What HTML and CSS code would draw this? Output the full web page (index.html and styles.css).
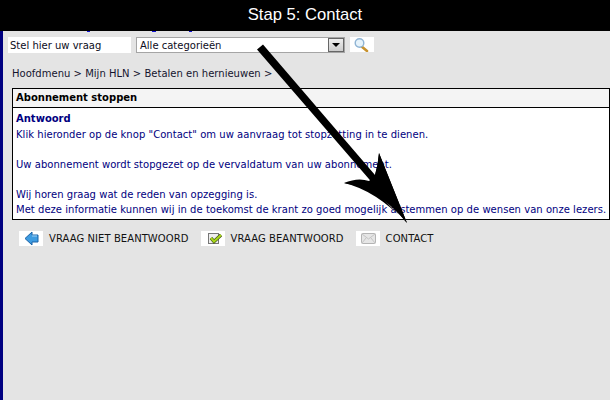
FILE: index.html
```html
<!DOCTYPE html>
<html lang="nl">
<head>
<meta charset="utf-8">
<title>Stap 5: Contact</title>
<link rel="stylesheet" href="styles.css">
</head>
<body>
<header class="banner">Stap 5: Contact</header>
<div class="page">
  <div class="links-edge"></div>
  <div class="searchbar">
    <div class="ask">Stel hier uw vraag</div>
    <div class="select"><span>Alle categorieën</span><span class="drop"><i></i></span></div>
    <span class="iconbox search"><svg width="24" height="15" viewBox="0 0 24 15"><path d="M11 9L17 14" stroke="#c8922e" stroke-width="2.6" stroke-linecap="round"/><circle cx="9.5" cy="6" r="4.3" fill="#e6f3fb" stroke="#8fb4d4" stroke-width="1.4"/></svg></span>
  </div>
  <div class="crumbs">Hoofdmenu &gt; Mijn HLN &gt; Betalen en hernieuwen &gt;</div>
  <section class="card">
    <h1 class="card-title">Abonnement stoppen</h1>
    <div class="card-body">
      <h2 class="answer">Antwoord</h2>
      <p>Klik hieronder op de knop "Contact" om uw aanvraag tot stopzetting in te dienen.</p>
      <p class="gap">Uw abonnement wordt stopgezet op de vervaldatum van uw abonnement.</p>
      <p class="gap">Wij horen graag wat de reden van opzegging is.</p>
      <p>Met deze informatie kunnen wij in de toekomst de krant zo goed mogelijk afstemmen op de wensen van onze lezers.</p>
    </div>
  </section>
  <div class="actions">
    <div class="action"><span class="iconbox"><svg width="24" height="15" viewBox="0 0 24 15"><path d="M6 7.5L13 1V4H19V11H13V14Z" fill="#3d9be0" stroke="#1b63a8"/><path d="M13 5H18" stroke="#9fd2f5"/></svg></span>VRAAG NIET BEANTWOORD</div>
    <div class="action"><span class="iconbox"><svg width="24" height="15" viewBox="0 0 24 15"><rect x="7.5" y="2.5" width="10" height="10" fill="#eee" stroke="#777"/><path d="M10 7L13 10.500L20 4" fill="none" stroke="#445518" stroke-width="3.400"/><path d="M10 7L13 10.500L20 4" fill="none" stroke="#a8d818" stroke-width="2"/></svg></span>VRAAG BEANTWOORD</div>
    <div class="action"><span class="iconbox"><svg width="24" height="15" viewBox="0 0 24 15"><rect x="5.500" y="2.500" width="14" height="10" rx="1" fill="#e6e6e6" stroke="#b4b4b4"/><path d="M6 3L12.500 8L19 3M6 12L10 7M19 12L15 7" fill="none" stroke="#c4c4c4"/></svg></span>CONTACT</div>
  </div>
</div>
<svg class="arrow" width="610" height="400" viewBox="0 0 610 400"><path d="M257 49.500L263 44.500L375 175Q378 165 379 153L407 223Q380 197 369 181Q358 177 344 183Q375 190 407 223Z" fill="#000"/><path d="M369 181L344 183Q378 188 407 223L379 153Q378 165 375 175Z" fill="#000"/></svg>
</body>
</html>
```
FILE: styles.css
```css
* { box-sizing: border-box; }
html, body { margin: 0; height: 100%; }
body {
  width: 610px; height: 400px; overflow: hidden; position: relative;
  background: #e4e4e4; color: #000;
  font-family: "DejaVu Sans", Verdana, sans-serif; font-size: 10px;
}
.banner {
  height: 31px; background: #000; color: #fff;
  font-family: "Liberation Sans", Arial, sans-serif; font-size: 16.6px;
  text-align: center; line-height: 30px;
}
.page { height: 369px; border-left: 3px solid #000080; padding: 0 0 0 5px; }
.links-edge {
  height: 1px; margin: 0 0 4px -8px;
  background:
    linear-gradient(#1414d8, #1414d8) 87px 0 / 3px 1px no-repeat,
    linear-gradient(#1414d8, #1414d8) 152px 0 / 4px 1px no-repeat,
    linear-gradient(#1414d8, #1414d8) 189px 0 / 3px 1px no-repeat;
}
.searchbar { display: flex; align-items: center; height: 17px; }
.ask { width: 123px; height: 16px; background: #fff; padding: 1px 0 0 2px; line-height: 15px; color: #0c0c1c; }
.select {
  width: 209px; height: 16px; margin-left: 5px; background: #fff; border: 1px solid #a5a5a5;
  padding-left: 3px; line-height: 15px; display: flex; justify-content: space-between; color: #0c0c1c;
}
.drop { width: 16px; height: 14px; background: linear-gradient(#eee, #ccc); border: 1px solid #666; display: flex; align-items: center; justify-content: center; }
.drop i { border-top: 4px solid #000; border-left: 4px solid transparent; border-right: 4px solid transparent; }
.iconbox { width: 24px; height: 15px; background: #fff; display: flex; flex: none; }
.search { margin-left: 5px; }
.crumbs { margin: 15px 0 0 4px; height: 11px; line-height: 11px; color: #14142e; letter-spacing: .02px; }
.card { margin: 9px 0 0 4px; border: 1px solid #000; background: #fff; height: 132px; }
.card-title { margin: 0; height: 19px; padding-left: 3px; background: #f4f4f4; border-bottom: 1px solid #000; font-size: 10px; line-height: 18px; font-weight: bold; }
.card-body { padding: 3px 0 3px 3px; color: #000080; }
.answer { margin: 0; font-size: 10px; line-height: 16px; font-weight: bold; }
.card-body p { margin: 0; line-height: 15px; letter-spacing: .035px; white-space: nowrap; }
.card-body p.gap { margin-top: 15px; }
.actions { display: flex; margin: 11px 0 0 11px; }
.action { display: flex; align-items: center; height: 15px; color: #111; line-height: 15px; margin-right: 12px; letter-spacing: .07px; }
.action .iconbox { margin-right: 6px; }
.arrow { position: absolute; left: 0; top: 0; pointer-events: none; }
```
